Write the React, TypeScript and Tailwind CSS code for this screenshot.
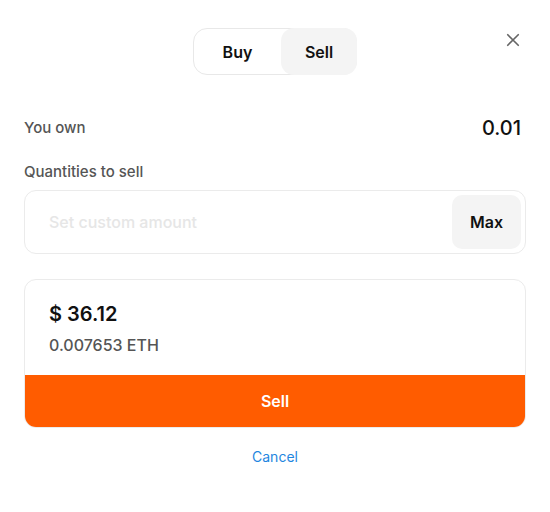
import React, { useState } from 'react';

export default function App() {
  const [mode, setMode] = useState<'buy' | 'sell'>('sell');
  const [amount, setAmount] = useState('');

  return (
    <div className="w-[550px] h-[512px] bg-white font-['Inter',sans-serif] px-6 pt-[28px]">
      {/* Header */}
      <div className="relative flex justify-center">
        <div className="flex h-[47px] rounded-[14px] border border-[#e8e8e8]">
          <button
            onClick={() => setMode('buy')}
            className={`w-[87px] rounded-[13px] text-[16px] font-semibold text-[#111] ${
              mode === 'buy' ? 'bg-[#f4f4f4]' : ''
            }`}
          >
            Buy
          </button>
          <button
            onClick={() => setMode('sell')}
            className={`w-[76px] -mr-px -my-px rounded-[13px] text-[16px] font-semibold text-[#111] ${
              mode === 'sell' ? 'bg-[#f4f4f4]' : ''
            }`}
          >
            Sell
          </button>
        </div>
        <button className="absolute right-[4px] top-[3px] text-[#666]">
          <svg width="18" height="18" viewBox="0 0 24 24" fill="none" stroke="currentColor" strokeWidth={2.2} strokeLinecap="round">
            <path d="M5 5l14 14M19 5L5 19" />
          </svg>
        </button>
      </div>

      {/* Balance */}
      <div className="mt-[38px] flex items-center justify-between">
        <span className="text-[15px] font-medium text-[#555]">You own</span>
        <span className="text-[20px] font-medium text-[#111] pr-[5px]">0.01</span>
      </div>

      <p className="mt-[18px] text-[15px] font-medium text-[#555]">Quantities to sell</p>

      {/* Amount input */}
      <div className="mt-[6px] flex h-[64px] items-center rounded-[12px] border border-[#ebebeb] p-[4px] pl-[24px]">
        <input
          value={amount}
          onChange={(e) => setAmount(e.target.value)}
          placeholder="Set custom amount"
          className="flex-1 bg-transparent text-[16px] font-medium text-[#111] outline-none placeholder:text-[#e6e6e6]"
        />
        <button className="h-[54px] w-[69px] rounded-[10px] bg-[#f4f4f4] text-[16px] font-semibold text-[#111]">
          Max
        </button>
      </div>

      {/* Summary card */}
      <div className="mt-[25px] overflow-hidden rounded-[12px] border border-[#ebebeb]">
        <div className="px-[24px] pt-[20px] pb-[19px]">
          <p className="text-[20px] font-semibold leading-[28px] text-[#111]">$ 36.12</p>
          <p className="mt-[6px] text-[16px] font-medium leading-[22px] text-[#555]">0.007653 ETH</p>
        </div>
        <button className="block h-[52px] w-full bg-[#ff5c00] text-[16px] font-semibold text-white">Sell</button>
      </div>

      <div className="mt-[18px] flex justify-center">
        <button className="text-[14px] text-[#1f86e0]">Cancel</button>
      </div>
    </div>
  );
}
